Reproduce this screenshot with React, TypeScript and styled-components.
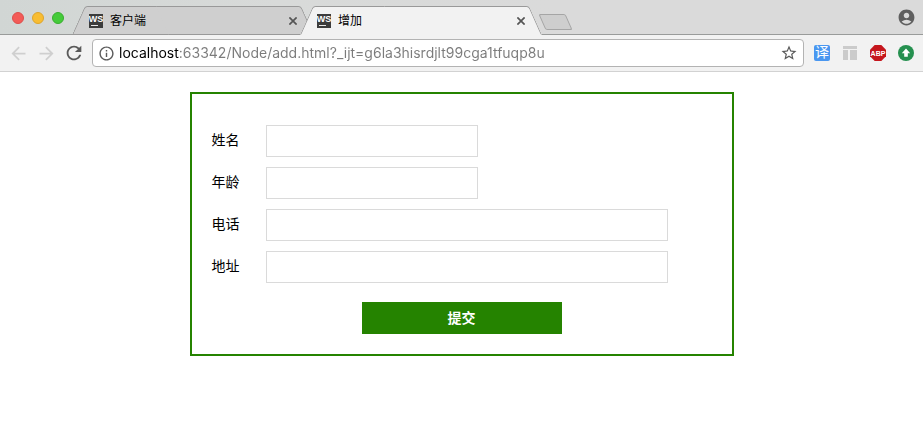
import React from "react";
import styled, { createGlobalStyle, css } from "styled-components";
import {
  MdAccountCircle,
  MdArrowBack,
  MdArrowForward,
  MdInfoOutline,
  MdRefresh,
  MdStarBorder,
} from "react-icons/md";

const GlobalStyle = createGlobalStyle`
  *, *::before, *::after { box-sizing: border-box; }
  body {
    margin: 0;
    background: #fff;
    color: #000;
    font-family: "Liberation Sans", "Noto Sans CJK SC", sans-serif;
  }
  button, input { font: inherit; }
`;

const plainButton = css`
  display: flex;
  align-items: center;
  justify-content: center;
  padding: 0;
  border: 0;
  background: none;
`;

const TabStrip = styled.header`
  display: flex;
  align-items: flex-end;
  height: 35px;
  padding: 0 7px 0 12px;
  background: linear-gradient(to right, #d1d6d4, #d8dad9 30%, #dadada 60%);
  box-shadow: inset 0 -1px #999b9a;
`;

const WindowControls = styled.div`
  display: flex;
  align-self: center;
  gap: 8px;
  margin-right: 8px;
`;

const WindowDot = styled.button<{ $fill: string; $edge: string }>`
  width: 12px;
  height: 12px;
  padding: 0;
  border: 1px solid ${(p) => p.$edge};
  border-radius: 50%;
  background: ${(p) => p.$fill};
`;

const TabList = styled.div`
  display: flex;
  min-width: 0;
`;

const Tab = styled.div<{ $active?: boolean }>`
  position: relative;
  z-index: ${(p) => (p.$active ? 1 : 0)};
  display: flex;
  align-items: center;
  flex: 0 1 242px;
  width: 242px;
  height: 29px;
  padding: 0 16px 0 17px;
  isolation: isolate;

  & + & {
    margin-left: -14px;
  }

  &::before,
  &::after {
    content: "";
    position: absolute;
    z-index: -1;
    top: 0;
    bottom: 0;
    border: 1px solid #999;
    border-bottom-color: ${(p) => (p.$active ? "#f2f2f2" : "#999")};
    background: ${(p) => (p.$active ? "#f2f2f2" : "#cfcfcf")};
  }

  &::before {
    left: 0;
    right: 50%;
    border-right: 0;
    border-top-left-radius: 3px;
    transform: skewX(-24deg);
    transform-origin: bottom;
  }

  &::after {
    left: 40%;
    right: 0;
    border-left: 0;
    border-top-right-radius: 3px;
    transform: skewX(24deg);
    transform-origin: bottom;
  }
`;

const TabTitle = styled.span`
  flex: 1;
  margin-left: 7px;
  overflow: hidden;
  font-size: 12px;
  line-height: 18px;
  white-space: nowrap;
`;

const TabClose = styled.button`
  ${plainButton}
  width: 10px;
  height: 10px;
`;

const NewTab = styled.button`
  width: 27px;
  height: 16px;
  margin: 0 0 5px;
  padding: 0;
  border: 1px solid #a5a5a5;
  border-radius: 2px;
  background: #cecece;
  transform: skewX(24deg);
`;

const Account = styled.button`
  ${plainButton}
  align-self: center;
  margin-left: auto;
  color: #5f5f5f;
`;

const Toolbar = styled.nav`
  display: flex;
  align-items: center;
  height: 37px;
  padding: 0 9px 0 7px;
  border-bottom: 1px solid #d2d2d2;
  background: #f2f2f2;
`;

const NavButtons = styled.div`
  display: flex;
  gap: 6px;
  margin-right: 7px;
`;

const NavButton = styled.button`
  ${plainButton}
  width: 22px;
  height: 22px;
  color: #5a5a5a;

  &:disabled {
    color: #cfcfcf;
  }
`;

const Omnibox = styled.div`
  display: flex;
  align-items: center;
  flex: 1;
  height: 28px;
  padding: 0 5px;
  border: 1px solid #b3b3b3;
  border-radius: 4px;
  background: #fff;
  color: #5a5a5a;
`;

const Address = styled.input`
  flex: 1;
  min-width: 0;
  height: 24px;
  margin-left: 4px;
  padding: 0 0 2px;
  border: 0;
  outline: 0;
  background: linear-gradient(to right, #000 60px, #7b7b7b 60px);
  background-clip: text;
  -webkit-background-clip: text;
  -webkit-text-fill-color: transparent;
  font-family: Inter, sans-serif;
  font-size: 14px;
`;

const IconButton = styled.button`
  ${plainButton}
  color: inherit;
`;

const Extensions = styled.div`
  display: flex;
  gap: 12px;
  margin-left: 10px;
`;

const ExtensionButton = styled.button`
  ${plainButton}
  width: 16px;
  height: 16px;
`;

const TranslateBadge = styled.span`
  width: 16px;
  height: 16px;
  border-radius: 2px;
  background: #4a97f0;
  color: #fff;
  font-size: 14px;
  line-height: 15px;
  text-align: center;
`;

const LogoText = styled.text`
  fill: #fff;
  font-family: "Liberation Sans", sans-serif;
  font-weight: bold;
  text-anchor: middle;
`;

const Page = styled.main`
  padding: 20px;
`;

const Form = styled.form`
  max-width: 544px;
  margin: 0 auto;
  padding: 31px 20px 20px;
  border: 2px solid #258300;
  font-size: 14px;
`;

const Fields = styled.div`
  display: grid;
  gap: 10px;
`;

const Field = styled.div`
  display: flex;
  align-items: center;
`;

const FieldLabel = styled.label`
  flex: 0 0 54px;
  padding-bottom: 2px;
  line-height: 20px;
`;

const TextInput = styled.input<{ $wide?: boolean }>`
  flex: 0 1 ${(p) => (p.$wide ? 402 : 212)}px;
  min-width: 0;
  height: 32px;
  padding: 0 10px;
  border: 1px solid #dadada;
  border-radius: 0;
  background: #fff;
`;

const Submit = styled.button`
  display: block;
  width: 200px;
  height: 32px;
  margin: 19px auto 0;
  padding: 0 0 2px;
  border: 0;
  background: #258300;
  color: #fff;
  font-weight: bold;
`;

const WebStormIcon = () => (
  <svg width="14" height="14" viewBox="0 0 14 14" aria-hidden="true">
    <rect width="14" height="14" fill="#3c3c3c" />
    <LogoText x="7" y="8" fontSize="9">
      WS
    </LogoText>
    <rect x="2" y="11" width="7" height="1" fill="#e8e8e8" />
  </svg>
);

const CloseIcon = () => (
  <svg width="8" height="8" viewBox="0 0 8 8" aria-hidden="true">
    <path d="M.4.4l7.2 7.2M7.6.4L.4 7.6" stroke="#555" strokeWidth="1.7" />
  </svg>
);

const LayoutIcon = () => (
  <svg width="14" height="14" viewBox="0 0 14 14" aria-hidden="true">
    <path d="M0 0h14v3H0zM0 4h5v10H0zM7 4h7v10H7z" fill="#cbcbcb" />
  </svg>
);

const AdblockIcon = () => (
  <svg width="16" height="16" viewBox="0 0 16 16" aria-hidden="true">
    <path d="M4.7 0h6.6L16 4.7v6.6L11.3 16H4.7L0 11.3V4.7z" fill="#c5161d" />
    <LogoText x="8" y="11" fontSize="7">
      ABP
    </LogoText>
  </svg>
);

const UpArrowIcon = () => (
  <svg width="16" height="16" viewBox="0 0 16 16" aria-hidden="true">
    <circle cx="8" cy="8" r="8" fill="#25904f" />
    <path d="M8 3.6l4.2 4.6H9.8v3.6H6.2V8.2H3.8z" fill="#fff" />
  </svg>
);

const tabs = [
  { title: "客户端", active: false },
  { title: "增加", active: true },
];

const fields = [
  { id: "name", label: "姓名", wide: false },
  { id: "age", label: "年龄", wide: false },
  { id: "phone", label: "电话", wide: true },
  { id: "address", label: "地址", wide: true },
];

export default function App() {
  return (
    <>
      <GlobalStyle />
      <TabStrip>
        <WindowControls>
          <WindowDot aria-label="Close window" $fill="#f35b57" $edge="#dc4f4c" />
          <WindowDot aria-label="Minimize window" $fill="#f8bd32" $edge="#dda52c" />
          <WindowDot aria-label="Zoom window" $fill="#45cb3a" $edge="#38ae2f" />
        </WindowControls>
        <TabList>
          {tabs.map((tab) => (
            <Tab key={tab.title} $active={tab.active}>
              <WebStormIcon />
              <TabTitle>{tab.title}</TabTitle>
              <TabClose aria-label={`Close ${tab.title}`}>
                <CloseIcon />
              </TabClose>
            </Tab>
          ))}
        </TabList>
        <NewTab aria-label="New tab" />
        <Account aria-label="Account">
          <MdAccountCircle size={19} />
        </Account>
      </TabStrip>
      <Toolbar>
        <NavButtons>
          <NavButton aria-label="Back" disabled>
            <MdArrowBack size={21} />
          </NavButton>
          <NavButton aria-label="Forward" disabled>
            <MdArrowForward size={21} />
          </NavButton>
          <NavButton aria-label="Reload">
            <MdRefresh size={22} />
          </NavButton>
        </NavButtons>
        <Omnibox>
          <IconButton aria-label="Site information">
            <MdInfoOutline size={17} />
          </IconButton>
          <Address
            aria-label="Address"
            spellCheck={false}
            defaultValue="localhost:63342/Node/add.html?_ijt=g6la3hisrdjlt99cga1tfuqp8u"
          />
          <IconButton aria-label="Bookmark">
            <MdStarBorder size={18} />
          </IconButton>
        </Omnibox>
        <Extensions>
          <ExtensionButton aria-label="Translate">
            <TranslateBadge>译</TranslateBadge>
          </ExtensionButton>
          <ExtensionButton aria-label="Layout">
            <LayoutIcon />
          </ExtensionButton>
          <ExtensionButton aria-label="Adblock Plus">
            <AdblockIcon />
          </ExtensionButton>
          <ExtensionButton aria-label="Update">
            <UpArrowIcon />
          </ExtensionButton>
        </Extensions>
      </Toolbar>
      <Page>
        <Form onSubmit={(event: React.FormEvent) => event.preventDefault()}>
          <Fields>
            {fields.map((field) => (
              <Field key={field.id}>
                <FieldLabel htmlFor={field.id}>{field.label}</FieldLabel>
                <TextInput id={field.id} type="text" $wide={field.wide} />
              </Field>
            ))}
          </Fields>
          <Submit type="submit">提交</Submit>
        </Form>
      </Page>
    </>
  );
}
